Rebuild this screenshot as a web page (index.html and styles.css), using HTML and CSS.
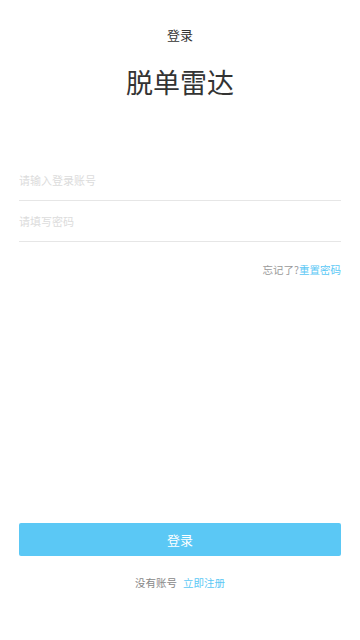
FILE: index.html
```html
<!DOCTYPE html>
<html lang="zh-CN">
<head>
    <meta charset="UTF-8">
    <meta name="viewport" content="width=device-width, initial-scale=1.0">
    <title>登录</title>
    <link rel="stylesheet" href="styles.css">
</head>
<body>

<div class="page">
    <div class="topbar">登录</div>

    <h1 class="brand">脱单雷达</h1>

    <div class="form">
        <input type="text" class="field" id="account" placeholder="请输入登录账号">
        <input type="password" class="field" id="password" placeholder="请填写密码">
    </div>

    <div class="forgot">忘记了?<a href="#">重置密码</a></div>

    <div class="bottom">
        <button class="login-btn">登录</button>
        <div class="register">没有账号<a href="#">立即注册</a></div>
    </div>
</div>

</body>
</html>
```

FILE: styles.css
```css
body {
    margin: 0;
    background: #fff;
    font-family: "Noto Sans CJK SC", "Noto Sans", sans-serif;
    color: #333;
}

.page {
    display: flex;
    flex-direction: column;
    min-height: 640px;
    padding: 0 19px 51px;
    box-sizing: border-box;
}

.topbar {
    height: 70px;
    line-height: 70px;
    text-align: center;
    font-size: 13px;
    color: #333;
}

.brand {
    margin: 0;
    height: 24px;
    line-height: 24px;
    text-align: center;
    font-size: 27px;
    font-weight: normal;
    color: #333;
}

.form {
    margin-top: 66px;
}

.field {
    display: block;
    width: 100%;
    height: 41px;
    padding: 0;
    border: none;
    border-bottom: 1px solid #e6e6e6;
    box-sizing: border-box;
    font-family: inherit;
    font-size: 11px;
    color: #333;
    outline: none;
}

.field::placeholder {
    color: #dcdcdc;
}

.forgot {
    margin-top: 22px;
    line-height: 12px;
    text-align: right;
    font-size: 10.5px;
    color: #999;
}

.forgot a, .register a {
    color: #5bc8f5;
    text-decoration: none;
}

.bottom {
    margin-top: auto;
}

.login-btn {
    display: block;
    width: 100%;
    height: 33px;
    border: none;
    border-radius: 2px;
    background: #5bc8f5;
    color: #fff;
    font-family: inherit;
    font-size: 13px;
}

.register {
    margin-top: 21px;
    line-height: 12px;
    text-align: center;
    font-size: 10.5px;
    color: #888;
}

.register a {
    margin-left: 6px;
}
```
